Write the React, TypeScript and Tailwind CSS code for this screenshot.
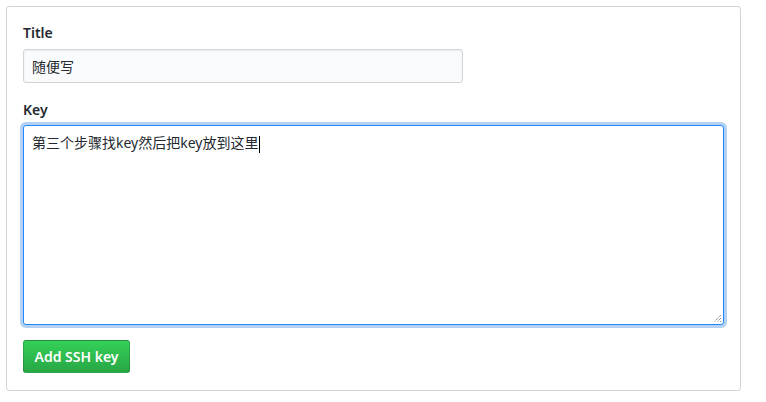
import React from "react";

export default function App() {
  const font = { fontFamily: '"Noto Sans", "Noto Sans CJK SC", sans-serif' };
  return (
    <div className="w-[766px] h-[402px] bg-white pt-[6px] pl-[6px]" style={font}>
      <div className="w-[735px] h-[385px] border border-[#d1d5da] rounded-[3px] p-[16px] flex flex-col">
        <label className="text-[14px] leading-[20px] font-semibold text-[#24292e] mb-[6px]">Title</label>
        <div className="w-[440px] h-[34px] border border-[#d1d5da] rounded-[3px] bg-[#fafbfc] px-[8px] flex items-center text-[14px] text-[#24292e] shadow-[inset_0_1px_2px_rgba(27,31,35,0.075)]">
          随便写
        </div>
        <label className="mt-[17px] text-[14px] leading-[20px] font-semibold text-[#24292e] mb-[5px]">Key</label>
        <div className="relative w-[701px] h-[200px] border border-[#2188ff] rounded-[3px] bg-white px-[8px] pt-[7px] text-[14px] leading-[20px] text-[#24292e] shadow-[0_0_0_3px_rgba(3,102,214,0.3)]">
          <span>第三个步骤找key然后把key放到这里</span>
          <span className="inline-block w-[1px] h-[17px] bg-black align-middle ml-[1px]" />
          <svg className="absolute right-[1px] bottom-[1px]" width="9" height="9" viewBox="0 0 9 9">
            <path d="M8 1 L1 8 M8 4 L4 8 M8 7 L7 8" stroke="#666" strokeWidth="1" strokeDasharray="1 1" />
          </svg>
        </div>
        <div className="mt-[15px]">
          <button className="h-[33px] w-[107px] rounded-[3px] border border-[rgba(27,31,35,0.2)] bg-gradient-to-b from-[#34d058] to-[#28a745] text-white text-[14px] font-semibold">
            Add SSH key
          </button>
        </div>
      </div>
    </div>
  );
}
